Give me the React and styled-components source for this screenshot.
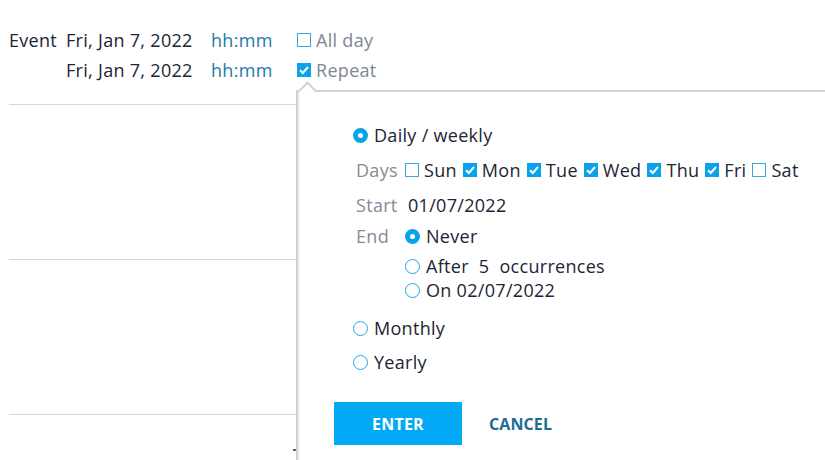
import React from 'react'
import styled, { createGlobalStyle } from 'styled-components'

const GlobalStyle = createGlobalStyle`
  html, body {
    margin: 0;
    padding: 0;
    background: #fff;
    overflow: hidden;
  }
  body {
    font-family: "Open Sans", "Noto Sans", sans-serif;
    color: #1b2535;
  }
`

const days = [
  { name: 'Sun', on: false },
  { name: 'Mon', on: true },
  { name: 'Tue', on: true },
  { name: 'Wed', on: true },
  { name: 'Thu', on: true },
  { name: 'Fri', on: true },
  { name: 'Sat', on: false },
]

const Check = ({ on }) => (
  <Box on={on}>
    {on && (
      <svg width="12" height="12" viewBox="0 0 12 12">
        <path d="M2 6.2 L4.8 9 L10 3" fill="none" stroke="#fff" strokeWidth="2" />
      </svg>
    )}
  </Box>
)

const App = () => {
  return (
    <Page>
      <GlobalStyle />
      <Header>
        <HeadRow>
          <Label>Event</Label>
          <DateText>Fri, Jan 7, 2022</DateText>
          <Time>hh:mm</Time>
          <Option><Check on={false} />All day</Option>
        </HeadRow>
        <HeadRow>
          <Label />
          <DateText>Fri, Jan 7, 2022</DateText>
          <Time>hh:mm</Time>
          <Option><Check on={true} />Repeat</Option>
        </HeadRow>
      </Header>

      <Calendar>
        <Slot />
        <Slot />
        <Slot />
      </Calendar>

      <Popover>
        <Arrow />
        <Body>
          <RadioRow gap="0">
            <Radio on />Daily / weekly
          </RadioRow>
          <FieldRow top="11px">
            <FieldLabel>Days</FieldLabel>
            {days.map(d => (
              <Day key={d.name}>
                <Check on={d.on} />
                {d.name}
              </Day>
            ))}
          </FieldRow>
          <FieldRow top="11px">
            <FieldLabel>Start</FieldLabel>
            <Value>01/07/2022</Value>
          </FieldRow>
          <EndBlock>
            <FieldLabel>End</FieldLabel>
            <EndOptions>
              <EndItem><Radio on />Never</EndItem>
              <EndItem top="6px"><Radio />After<Count>5</Count>occurrences</EndItem>
              <EndItem top="0"><Radio />On 02/07/2022</EndItem>
            </EndOptions>
          </EndBlock>
          <RadioRow gap="14px">
            <Radio />Monthly
          </RadioRow>
          <RadioRow gap="10px">
            <Radio />Yearly
          </RadioRow>
          <Actions>
            <Primary>ENTER</Primary>
            <Ghost>CANCEL</Ghost>
          </Actions>
        </Body>
      </Popover>
      <Marker />
    </Page>
  )
}

export default App

const Page = styled.div`
  position: relative;
  width: 825px;
  height: 460px;
  overflow: hidden;
  font-size: 18px;
  letter-spacing: 0.3px;
`

const Header = styled.div`
  display: flex;
  flex-direction: column;
  padding: 25px 0 0 9px;
`

const HeadRow = styled.div`
  display: flex;
  align-items: center;
  height: 30px;
`

const Label = styled.div`
  width: 57px;
  color: #1b2535;
`

const DateText = styled.div`
  width: 145px;
  white-space: nowrap;
`

const Time = styled.div`
  width: 86px;
  color: #1f7aaa;
`

const Option = styled.div`
  display: flex;
  align-items: center;
  gap: 5px;
  color: #7d8794;
`

const Box = styled.span`
  box-sizing: border-box;
  width: 14px;
  height: 14px;
  display: inline-flex;
  align-items: center;
  justify-content: center;
  border: 1px solid ${p => (p.on ? '#0aa3ea' : '#3aa6de')};
  background: ${p => (p.on ? '#0aa3ea' : '#fff')};
  flex-shrink: 0;
`

const Calendar = styled.div`
  display: flex;
  flex-direction: column;
  margin: 19px 0 0 9px;
  width: 290px;
`

const Slot = styled.div`
  height: 154px;
  border-top: 1px solid #d3d6dc;
`

const Popover = styled.div`
  position: absolute;
  left: 296px;
  top: 90px;
  width: 620px;
  height: 420px;
  background: #fff;
  border-left: 2px solid #cfcfcf;
  border-top: 2px solid #d2d2d2;
  box-shadow: 4px 0 2px -2px #f2f2f2 inset;
`

const Arrow = styled.div`
  position: absolute;
  left: 3px;
  top: -8px;
  width: 11px;
  height: 11px;
  background: #fff;
  border-left: 2px solid #d2d2d2;
  border-top: 2px solid #d2d2d2;
  transform: rotate(45deg);
`

const Body = styled.div`
  display: flex;
  flex-direction: column;
  padding: 31px 0 0 55px;
`

const Radio = styled.span`
  box-sizing: border-box;
  width: 15px;
  height: 15px;
  border-radius: 50%;
  flex-shrink: 0;
  margin-right: 6px;
  border: ${p => (p.on ? '5px solid #0aa3ea' : '1.7px solid #1ea7e8')};
  background: #fff;
`

const RadioRow = styled.div`
  display: flex;
  align-items: center;
  height: 24px;
  margin-top: ${p => p.gap};
`

const FieldRow = styled.div`
  display: flex;
  align-items: center;
  height: 24px;
  margin-top: ${p => p.top};
  padding-left: 3px;
`

const FieldLabel = styled.div`
  width: 49px;
  color: #858b93;
  flex-shrink: 0;
`

const Day = styled.div`
  display: flex;
  align-items: center;
  gap: 5px;
  margin-right: 6px;
`

const Value = styled.div`
  padding-left: 3px;
`

const EndBlock = styled.div`
  display: flex;
  margin-top: 7px;
  padding-left: 3px;
`

const EndOptions = styled.div`
  display: flex;
  flex-direction: column;
`

const EndItem = styled.div`
  display: flex;
  align-items: center;
  height: 24px;
  margin-top: ${p => p.top || '0'};
`

const Count = styled.span`
  margin: 0 10px;
`

const Actions = styled.div`
  display: flex;
  align-items: center;
  margin: 28px 0 0 -19px;
  gap: 27px;
`

const Primary = styled.button`
  width: 128px;
  height: 43px;
  border: none;
  background: #03a9f4;
  color: #fff;
  font-family: inherit;
  font-size: 16px;
  font-weight: 700;
  letter-spacing: 0.2px;
  cursor: pointer;
`

const Ghost = styled.button`
  border: none;
  background: none;
  padding: 0;
  color: #1f6b91;
  font-family: inherit;
  font-size: 16px;
  font-weight: 700;
  letter-spacing: 0.1px;
  cursor: pointer;
`

const Marker = styled.div`
  position: absolute;
  left: 293px;
  top: 449px;
  width: 3px;
  height: 2px;
  background: #2a6d8c;
`
